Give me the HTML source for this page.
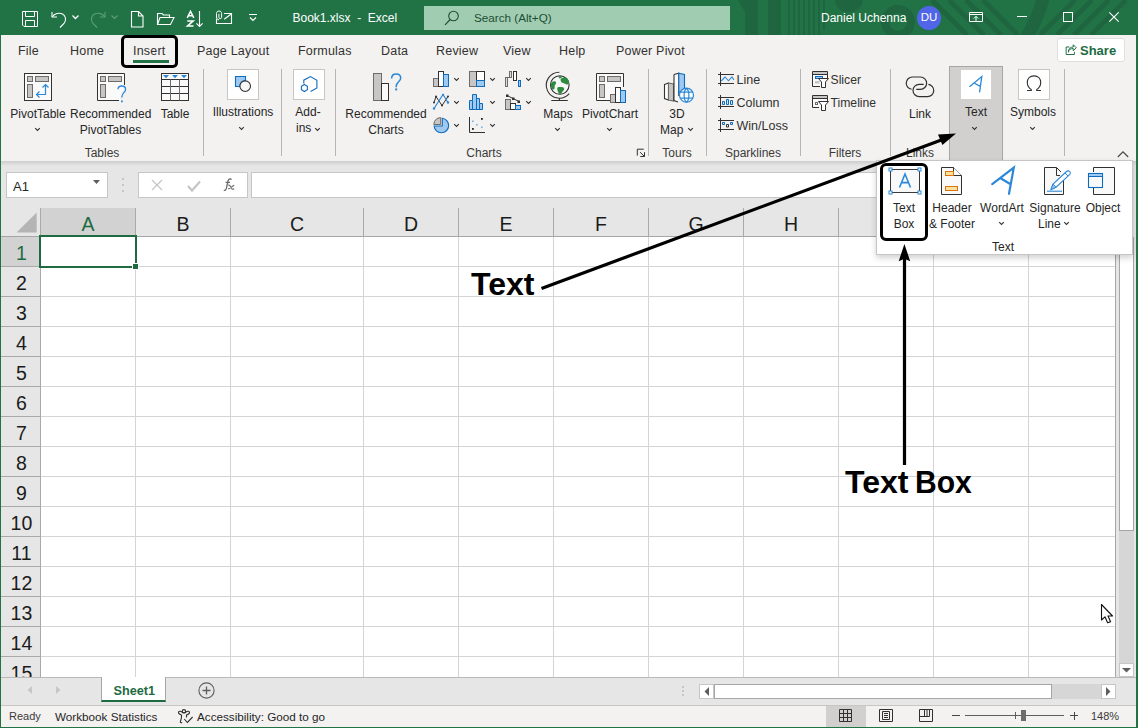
<!DOCTYPE html>
<html><head><meta charset="utf-8">
<style>
*{box-sizing:border-box;margin:0;padding:0}
html,body{width:1138px;height:728px;overflow:hidden;background:#f3f2f1;font-family:"Liberation Sans",sans-serif;color:#323130}
.a{position:absolute}
.t{position:absolute;white-space:nowrap;line-height:1}
svg{position:absolute;overflow:visible}
#title{left:0;top:0;width:1138px;height:35px;background:#217346}
#tabs .t{font-size:12.5px;top:45px;color:#323130;letter-spacing:0.2px}
.rl{font-size:12px;color:#262626}
.sep{position:absolute;top:69px;width:1px;height:87px;background:#b8b6b4}
.gl{font-size:12px;color:#3b3a39;top:147px}
#grid{left:0;top:208px;width:1116px;height:469px;background:#fff}
.vl{position:absolute;top:0;width:1px;height:469px;background:#e1e1e1}
.hl{position:absolute;left:0;width:1115px;height:1px;background:#e1e1e1}
.ch{position:absolute;top:208px;height:27px;font-size:19.5px;color:#222;text-align:center;line-height:27px}
.rh{position:absolute;left:0;width:40px;font-size:19.5px;color:#222;text-align:center;line-height:30px}
</style></head>
<body>
<!-- title bar -->
<div id="title" class="a"></div>

<!-- title pattern -->
<svg style="left:0;top:0;overflow:hidden" width="1138" height="35" viewBox="0 0 1138 35">
<g fill="#1f6640">
<path d="M738 0H758V35H745V12Z"/>
<rect x="768" y="0" width="13" height="35"/>
<rect x="788" y="0" width="2" height="35"/><rect x="793" y="0" width="2" height="35"/><rect x="798" y="0" width="2" height="35"/><rect x="803" y="0" width="2" height="35"/><rect x="808" y="0" width="2" height="35"/><rect x="813" y="0" width="2" height="35"/><rect x="818" y="0" width="2" height="35"/><rect x="823" y="0" width="2" height="30"/>
<path d="M835 0A14 12 0 0 0 863 0Z"/>
</g>
<g fill="none" stroke="#1f6640">
<circle cx="898" cy="22" r="13" stroke-width="8"/>
<path d="M1044 -5C1040 12 1034 25 1025 40" stroke-width="13"/>
</g>
<g stroke="#1f6640" stroke-width="5">
<path d="M932 0L967 35M949 0L984 35M966 0L1001 35M983 0L1018 35"/>
<path d="M1040 35L1075 0M1057 35L1092 0M1074 35L1109 0M1091 35L1126 0"/>
</g>
</svg>
<!-- quick access -->
<svg style="left:22px;top:11px" width="17" height="17" viewBox="0 0 17 17">
<path d="M0.5 0.5H15.5V15.5H2L0.5 14Z" fill="none" stroke="#fff"/>
<path d="M3.5 0.5V5.5H12.5V0.5M3.5 15.5V9.5H12.5V15.5" fill="none" stroke="#fff"/>
</svg>
<svg style="left:51px;top:11px" width="16" height="17" viewBox="0 0 16 17">
<path d="M1 1V6H6" fill="none" stroke="#fff" stroke-width="1.1"/>
<path d="M1.2 5.8C3.5 2.5 8 1.3 11.5 3C15 4.8 15.5 9.5 13 12.5L9 16.5" fill="none" stroke="#fff" stroke-width="1.1"/>
</svg>
<svg style="left:72px;top:15px" width="7" height="5"><path d="M0.5 0.5L3.5 3.5L6.5 0.5" fill="none" stroke="#fff" stroke-width="1.3"/></svg>
<svg style="left:90px;top:11px" width="16" height="17" viewBox="0 0 16 17">
<path d="M15 1V6H10" fill="none" stroke="#5f9e77" stroke-width="1.1"/>
<path d="M14.8 5.8C12.5 2.5 8 1.3 4.5 3C1 4.8 0.5 9.5 3 12.5L7 16.5" fill="none" stroke="#5f9e77" stroke-width="1.1"/>
</svg>
<svg style="left:111px;top:15px" width="7" height="5"><path d="M0.5 0.5L3.5 3.5L6.5 0.5" fill="none" stroke="#5f9e77" stroke-width="1.1"/></svg>
<svg style="left:131px;top:11px" width="13" height="17" viewBox="0 0 13 17">
<path d="M0.5 0.5H7.5L12 5V16H0.5Z M7.5 0.5V5H12" fill="none" stroke="#fff" stroke-width="1.1"/>
</svg>
<svg style="left:157px;top:13px" width="18" height="12" viewBox="0 0 18 12">
<path d="M0.5 11.5V0.5H5L6.5 2H12.5V4.5" fill="none" stroke="#fff" stroke-width="1.1"/>
<path d="M0.5 11.5L3 4.5H17L13.5 11.5Z" fill="none" stroke="#fff" stroke-width="1.1"/>
</svg>
<svg style="left:180px;top:6px" width="60" height="24" viewBox="180 6 60 24">
<path d="M187.2 17.8L190.5 11.3L193.8 17.8M188.4 15.7H192.6" fill="none" stroke="#fff" stroke-width="1.5"/>
<path d="M187.3 20.9H193.2L187.4 26.1H193.5" fill="none" stroke="#fff" stroke-width="1.5" stroke-linejoin="miter"/>
<path d="M199.5 11V26.5M196.4 23.3L199.5 26.5L202.6 23.3" fill="none" stroke="#fff" stroke-width="1.1"/>
<path d="M224 13.5H231.5V23.5H216.5V19" fill="none" stroke="#fff" stroke-width="1.1"/>
<path d="M224.2 19.3L231.2 14" fill="none" stroke="#fff" stroke-width="1.1"/>
<path d="M219 19.8C217.3 19.8 216.5 18.6 216.5 17V13.6C216.5 12 217.6 11 219 11C220.5 11 221.6 12 221.6 13.6V17.4C221.6 18.3 221 18.7 220.2 18.7C219.4 18.7 218.9 18.3 218.9 17.4V13.8" fill="none" stroke="#fff" stroke-width="1"/>
</svg>
<svg style="left:249px;top:14px" width="8" height="8" viewBox="0 0 8 8"><path d="M0 0.5H8M1 3.5L4 6.5L7 3.5" fill="none" stroke="#fff" stroke-width="1.2"/></svg>

<!-- window controls -->
<svg style="left:969px;top:12px" width="14" height="10" viewBox="0 0 14 10"><path d="M0.5 0.5H13.5V9.5H0.5ZM0.5 2.5H13.5M7 9V4.5M4.8 6.5L7 4.3L9.2 6.5" fill="none" stroke="#fff" stroke-width="1"/></svg>
<div class="a" style="left:1017px;top:16px;width:10px;height:1px;background:#fff"></div>
<div class="a" style="left:1063px;top:12px;width:10px;height:10px;border:1px solid #fff"></div>
<svg style="left:1109px;top:12px" width="10" height="10" viewBox="0 0 10 10"><path d="M0.3 0.3L9.7 9.7M9.7 0.3L0.3 9.7" stroke="#fff" stroke-width="1.1"/></svg>

<div class="t" style="left:292.5px;top:12px;font-size:12px;color:#fff">Book1.xlsx&nbsp; - &nbsp;Excel</div>
<div class="a" style="left:424px;top:6px;width:306px;height:24px;background:#a0cdb2"></div>
<div class="t" style="left:474px;top:12px;font-size:11.7px;color:#1f4d33">Search (Alt+Q)</div>
<!-- search icon -->
<svg style="left:444px;top:10px" width="16" height="16" viewBox="0 0 16 16"><circle cx="9.5" cy="6" r="4.8" fill="none" stroke="#1f4d33" stroke-width="1.1"/><path d="M6.2 9.5L1 14.8" stroke="#1f4d33" stroke-width="1.2"/></svg>
<div class="t" style="left:821px;top:12px;font-size:12px;color:#fff">Daniel Uchenna</div>
<div class="a" style="left:917px;top:6px;width:24px;height:24px;border-radius:50%;background:#5165e8"></div>
<div class="t" style="left:917px;top:12px;width:24px;text-align:center;font-size:11.5px;color:#fff">DU</div>

<!-- window borders -->
<div class="a" style="left:0;top:35px;width:1px;height:693px;background:#217346"></div>
<div class="a" style="left:1136px;top:35px;width:2px;height:693px;background:#217346"></div>
<div class="a" style="left:0;top:727px;width:1138px;height:1px;background:#217346"></div>

<!-- tabs -->
<div id="tabs">
<div class="t" style="left:18px">File</div>
<div class="t" style="left:70px">Home</div>
<div class="t" style="left:133px">Insert</div>
<div class="t" style="left:197px">Page Layout</div>
<div class="t" style="left:298px">Formulas</div>
<div class="t" style="left:381px">Data</div>
<div class="t" style="left:436px">Review</div>
<div class="t" style="left:503px">View</div>
<div class="t" style="left:559px">Help</div>
<div class="t" style="left:616px">Power Pivot</div>
</div>
<div class="a" style="left:133px;top:60px;width:36px;height:3px;background:#217346"></div>
<div class="a" style="left:121px;top:35px;width:57px;height:33px;border:3px solid #000;border-radius:5px"></div>


<!-- ===== RIBBON ===== -->
<div id="ribbon">
<!-- separators -->
<div class="sep" style="left:203px"></div>
<div class="sep" style="left:281px"></div>
<div class="sep" style="left:335px"></div>
<div class="sep" style="left:648px"></div>
<div class="sep" style="left:706px"></div>
<div class="sep" style="left:800px"></div>
<div class="sep" style="left:890px"></div>
<div class="sep" style="left:1064px"></div>

<!-- group labels -->
<div class="t gl" style="left:62px;width:80px;text-align:center">Tables</div>
<div class="t gl" style="left:444px;width:80px;text-align:center">Charts</div>
<div class="t gl" style="left:637px;width:80px;text-align:center">Tours</div>
<div class="t gl" style="left:713px;width:80px;text-align:center">Sparklines</div>
<div class="t gl" style="left:805px;width:80px;text-align:center">Filters</div>
<div class="t gl" style="left:880px;width:80px;text-align:center">Links</div>

<!-- Tables -->
<svg style="left:24px;top:73px" width="28" height="28" viewBox="0 0 28 28">
<rect x="0.5" y="0.5" width="27" height="27" fill="#fafafa" stroke="#323130"/>
<rect x="3.5" y="3.5" width="5" height="5" fill="#c8c6c4" stroke="#6e6c6a"/>
<rect x="11.5" y="3.5" width="13" height="5" fill="#c8c6c4" stroke="#6e6c6a"/>
<rect x="3.5" y="11.5" width="5" height="13" fill="#c8c6c4" stroke="#6e6c6a"/>
<path d="M21.5 11.5V21.5H12.5M18.5 14.5L21.5 11.5L24.5 14.5M15.5 18.5L12.5 21.5L15.5 24.5" fill="none" stroke="#2b88d8" stroke-width="1.2"/>
</svg>
<div class="t rl" style="left:8px;top:107.5px;width:60px;text-align:center">PivotTable</div>
<svg style="left:34px;top:127px" width="7" height="5"><path d="M1.2 1.2L3.5 3.5L5.8 1.2" fill="none" stroke="#323130" stroke-width="1.1"/></svg>

<svg style="left:97px;top:73px" width="31" height="30" viewBox="0 0 31 30">
<path d="M27.5 12V0.5H0.5V27.5H22" fill="#fafafa" stroke="#323130"/>
<rect x="3.5" y="3.5" width="5" height="5" fill="#c8c6c4" stroke="#6e6c6a"/>
<rect x="11.5" y="3.5" width="13" height="5" fill="#c8c6c4" stroke="#6e6c6a"/>
<rect x="3.5" y="11.5" width="5" height="13" fill="#c8c6c4" stroke="#6e6c6a"/>
<path d="M21 16.2C21 14 22.6 13 24.8 13C27 13 28.6 14.4 28.6 16.4C28.6 19.4 24.9 20 24.9 23.6V24.6" fill="none" stroke="#2b88d8" stroke-width="1.3"/>
<rect x="24" y="27.5" width="1.8" height="1.8" fill="#2b88d8"/>
</svg>
<div class="t rl" style="left:70px;top:108px;width:81px;text-align:center">Recommended</div>
<div class="t rl" style="left:70px;top:124px;width:81px;text-align:center">PivotTables</div>

<svg style="left:161px;top:73px" width="28" height="28" viewBox="0 0 28 28">
<rect x="0.5" y="0.5" width="27" height="27" fill="#fafafa" stroke="#323130"/>
<path d="M0.5 6.5H27.5M0.5 13.5H27.5M0.5 20.5H27.5" stroke="#323130"/>
<path d="M9.5 6.5V27.5M18.5 6.5V27.5" stroke="#6e6c6a"/>
<path d="M2 2H8L5 5.2ZM11 2H17L14 5.2ZM20 2H26L23 5.2Z" fill="#2b88d8"/>
</svg>
<div class="t rl" style="left:155px;top:108px;width:40px;text-align:center">Table</div>

<!-- Illustrations -->
<div class="a" style="left:227px;top:69px;width:32px;height:31px;background:#fff;border:1px solid #c8c6c4"></div>
<svg style="left:227px;top:69px" width="32" height="31" viewBox="0 0 32 31">
<path d="M8.5 7.5H18.5V11.5A5.5 5.5 0 0 0 13 17.5H8.5Z" fill="#9fc9f0" stroke="#0f6cbd" stroke-width="1.1"/>
<circle cx="18.2" cy="17.2" r="5.3" fill="#f8f8f8" stroke="#323130" stroke-width="1.1"/>
</svg>
<div class="t rl" style="left:207px;top:106px;width:72px;text-align:center">Illustrations</div>
<svg style="left:238px;top:126px" width="7" height="5"><path d="M1.2 1.2L3.5 3.5L5.8 1.2" fill="none" stroke="#323130" stroke-width="1.1"/></svg>

<!-- Add-ins -->
<div class="a" style="left:293px;top:69px;width:32px;height:31px;background:#fff;border:1px solid #c8c6c4"></div>
<svg style="left:293px;top:69px" width="32" height="31" viewBox="0 0 32 31">
<path d="M10.8 14.5V11.2L17.4 7.6L23.9 11.2V18.9L17.6 22.5" fill="none" stroke="#0f6cbd" stroke-width="1.1"/>
<path d="M11.4 15.5L14.4 17.25V20.75L11.4 22.5L8.4 20.75V17.25Z" fill="none" stroke="#0f6cbd" stroke-width="1.1"/>
</svg>
<div class="t rl" style="left:288px;top:106px;width:40px;text-align:center">Add-</div>
<div class="t rl" style="left:296px;top:122px">ins</div>
<svg style="left:314px;top:127px" width="7" height="5"><path d="M1.2 1.2L3.5 3.5L5.8 1.2" fill="none" stroke="#323130" stroke-width="1.1"/></svg>

<!-- Charts -->
<svg style="left:373px;top:73px" width="30" height="29" viewBox="0 0 30 29">
<rect x="0.5" y="0.5" width="8" height="27" fill="#c8c6c4" stroke="#6e6c6a"/>
<rect x="8.5" y="10.5" width="7" height="17" fill="#fafafa" stroke="#323130"/>
<path d="M18.6 5.6C18.6 2.6 20.4 0.9 23.2 0.9C25.9 0.9 27.7 2.6 27.7 5C27.7 8.6 23.2 9 23.2 13.3V14.3" fill="none" stroke="#2b88d8" stroke-width="1.5"/>
<rect x="22.2" y="15.4" width="2" height="2" fill="#2b88d8"/>
</svg>
<div class="t rl" style="left:341px;top:108px;width:90px;text-align:center">Recommended</div>
<div class="t rl" style="left:341px;top:124px;width:90px;text-align:center">Charts</div>

<svg style="left:433px;top:71px" width="16" height="16" viewBox="0 0 16 16">
<rect x="0.5" y="7.5" width="5" height="8" fill="#c8c6c4" stroke="#6e6c6a"/>
<rect x="5.5" y="0.5" width="5" height="15" fill="#fff" stroke="#323130"/>
<rect x="10.5" y="3.5" width="5" height="12" fill="#9fc9f0" stroke="#0f6cbd"/>
</svg>
<svg style="left:469px;top:71px" width="16" height="16" viewBox="0 0 16 16">
<rect x="0.5" y="0.5" width="7" height="15" fill="#c8c6c4" stroke="#6e6c6a"/>
<rect x="7.5" y="0.5" width="8" height="9" fill="#fff" stroke="#323130"/>
<rect x="7.5" y="9.5" width="8" height="6" fill="#9fc9f0" stroke="#0f6cbd"/>
</svg>
<svg style="left:505px;top:71px" width="16" height="16" viewBox="0 0 16 16">
<rect x="0.5" y="6.5" width="2" height="9" fill="#e0dfde" stroke="#6e6c6a"/>
<rect x="4.5" y="0.5" width="2" height="6" fill="#e0dfde" stroke="#6e6c6a"/>
<path d="M2.5 6.5H4.5" stroke="#6e6c6a"/>
<rect x="8.5" y="0.5" width="3" height="9" fill="#fff" stroke="#323130"/>
<rect x="13.5" y="9.5" width="2" height="6" fill="#9fc9f0" stroke="#0f6cbd"/>
</svg>
<svg style="left:433px;top:94px" width="16" height="16" viewBox="0 0 16 16">
<path d="M1 8.5L3 2.5L9 11.5L15 2.5" fill="none" stroke="#323130" stroke-width="1"/>
<path d="M1 14.5L10 0.5L15 8.5" fill="none" stroke="#2b88d8" stroke-width="1.2"/>
<circle cx="1" cy="14.5" r="1.2" fill="#2b88d8"/><circle cx="15" cy="8.5" r="1.2" fill="#2b88d8"/><circle cx="10" cy="0.8" r="1.1" fill="#2b88d8"/>
<circle cx="1" cy="8.5" r="1" fill="#323130"/><circle cx="3" cy="2.5" r="1" fill="#323130"/><circle cx="9" cy="11.5" r="1" fill="#323130"/><circle cx="15" cy="2.5" r="1" fill="#323130"/>
</svg>
<svg style="left:469px;top:94px" width="16" height="16" viewBox="0 0 16 16">
<path d="M0.5 15.5V6.5H3.5V0.5H7.5V4.5H10.5V9.5H13.5V15.5Z" fill="#9fc9f0" stroke="#0f6cbd"/>
<path d="M3.5 6.5V15.5M7.5 4.5V15.5M10.5 9.5V15.5" stroke="#0f6cbd"/>
</svg>
<svg style="left:505px;top:94px" width="16" height="16" viewBox="0 0 16 16">
<rect x="0.5" y="5.5" width="5" height="10" fill="#c8c6c4" stroke="#6e6c6a"/>
<rect x="5.5" y="9.5" width="5" height="6" fill="#fff" stroke="#323130"/>
<rect x="10.5" y="11.5" width="5" height="4" fill="#9fc9f0" stroke="#0f6cbd"/>
<path d="M2 1.5L14 7.5" stroke="#323130"/>
<rect x="1" y="0.5" width="2.5" height="2.5" fill="#323130"/><rect x="7" y="3.5" width="2.5" height="2.5" fill="#323130"/><rect x="12.5" y="6.5" width="2.5" height="2.5" fill="#323130"/>
</svg>
<svg style="left:433px;top:117px" width="18" height="18" viewBox="0 0 18 18">
<path d="M9.3 9V1.2A7.3 7.3 0 1 1 1.1 9Z" fill="#9fc9f0" stroke="#0f6cbd" stroke-width="1.1"/>
<path d="M7.7 7.5V0.6A6.9 6.9 0 0 0 0.8 7.5Z" fill="#c8c6c4" stroke="#6e6c6a" stroke-width="1"/>
</svg>
<svg style="left:469px;top:117px" width="16" height="16" viewBox="0 0 16 16">
<path d="M0.5 0V15.5H16" fill="none" stroke="#323130"/>
<rect x="3" y="3.5" width="1.6" height="1.6" fill="#6fb1ea"/><rect x="7" y="7" width="1.6" height="1.6" fill="#6fb1ea"/><rect x="12" y="9.5" width="1.6" height="1.6" fill="#6fb1ea"/>
<rect x="3" y="11" width="1.8" height="1.8" fill="#222"/><rect x="12" y="1" width="1.8" height="1.8" fill="#222"/>
</svg>
<svg style="left:453px;top:77px" width="7" height="5"><path d="M1.2 1.2L3.5 3.5L5.8 1.2" fill="none" stroke="#323130" stroke-width="1.1"/></svg>
<svg style="left:489px;top:77px" width="7" height="5"><path d="M1.2 1.2L3.5 3.5L5.8 1.2" fill="none" stroke="#323130" stroke-width="1.1"/></svg>
<svg style="left:525px;top:77px" width="7" height="5"><path d="M1.2 1.2L3.5 3.5L5.8 1.2" fill="none" stroke="#323130" stroke-width="1.1"/></svg>
<svg style="left:453px;top:100px" width="7" height="5"><path d="M1.2 1.2L3.5 3.5L5.8 1.2" fill="none" stroke="#323130" stroke-width="1.1"/></svg>
<svg style="left:489px;top:100px" width="7" height="5"><path d="M1.2 1.2L3.5 3.5L5.8 1.2" fill="none" stroke="#323130" stroke-width="1.1"/></svg>
<svg style="left:525px;top:100px" width="7" height="5"><path d="M1.2 1.2L3.5 3.5L5.8 1.2" fill="none" stroke="#323130" stroke-width="1.1"/></svg>
<svg style="left:453px;top:123px" width="7" height="5"><path d="M1.2 1.2L3.5 3.5L5.8 1.2" fill="none" stroke="#323130" stroke-width="1.1"/></svg>
<svg style="left:489px;top:123px" width="7" height="5"><path d="M1.2 1.2L3.5 3.5L5.8 1.2" fill="none" stroke="#323130" stroke-width="1.1"/></svg>

<!-- Maps -->
<svg style="left:546px;top:71px" width="26" height="31" viewBox="0 0 26 31">
<circle cx="13.8" cy="14" r="9.3" fill="#f7f7f7" stroke="#323130" stroke-width="1.1"/>
<path d="M13.4 1.2A13 13 0 1 0 23.2 22.6" fill="none" stroke="#323130" stroke-width="1.1"/>
<path d="M13.4 27V29.5M5.3 29.5H21.8" stroke="#323130" stroke-width="1.1"/>
<path d="M14.6 8.5C15.5 6.5 18.5 6.2 20.5 7C22.5 8 23.2 10.5 22.8 12.5C22 13.8 20.5 13.8 19.5 13C18.5 12.2 17 12.5 16 11.5C15 10.8 14.4 9.5 14.6 8.5Z" fill="#2e8b3e"/>
<path d="M5 12.5C5.5 10.8 7.5 10 9.5 10.5C10.5 11.5 10.2 13 9 14C8.3 15 9 16.5 8.5 17.8C7.8 19 6.2 18.5 5.5 17C4.8 15.5 4.7 14 5 12.5Z" fill="#2e8b3e"/>
<path d="M11.5 16.5C13 15.8 15.5 16 17.5 16.5C18.8 17.2 18.2 19 17 20C16 21 15.8 22.5 14.5 23C13 23.2 12.5 22 12 20.8C11.5 19.5 10.8 17.5 11.5 16.5Z" fill="#2e8b3e"/>
<path d="M12.8 5.5C13.5 4.8 15.5 4.8 15.8 5.8C15.8 6.8 14.8 7.5 13.8 7.5C13 7.3 12.5 6.3 12.8 5.5Z" fill="#2e8b3e"/>
</svg>
<div class="t rl" style="left:538px;top:108px;width:40px;text-align:center">Maps</div>
<svg style="left:554px;top:127px" width="7" height="5"><path d="M1.2 1.2L3.5 3.5L5.8 1.2" fill="none" stroke="#323130" stroke-width="1.1"/></svg>

<svg style="left:596px;top:73px" width="31" height="30" viewBox="0 0 31 30">
<path d="M14 27.5H0.5V0.5H27.5V14" fill="#fafafa" stroke="#323130"/>
<rect x="3.5" y="3.5" width="5" height="5" fill="#c8c6c4" stroke="#6e6c6a"/>
<rect x="11.5" y="3.5" width="13" height="5" fill="#c8c6c4" stroke="#6e6c6a"/>
<rect x="3.5" y="11.5" width="5" height="13" fill="#c8c6c4" stroke="#6e6c6a"/>
<rect x="14.5" y="21.5" width="5" height="8" fill="#c8c6c4" stroke="#6e6c6a"/>
<rect x="19.5" y="14.5" width="5" height="15" fill="#fff" stroke="#323130"/>
<rect x="24.5" y="17.5" width="5" height="12" fill="#9fc9f0" stroke="#0f6cbd"/>
</svg>
<div class="t rl" style="left:580px;top:108px;width:60px;text-align:center">PivotChart</div>
<svg style="left:606px;top:127px" width="7" height="5"><path d="M1.2 1.2L3.5 3.5L5.8 1.2" fill="none" stroke="#323130" stroke-width="1.1"/></svg>
<svg style="left:630px;top:140px" width="20" height="20" viewBox="630 140 20 20"><path d="M637.3 155.6V149.2H643.7M640.1 152.2L644.3 156.3M644.5 152.2V156.5H640.3" fill="none" stroke="#323130" stroke-width="1"/></svg>

<!-- Tours -->
<svg style="left:663px;top:72px" width="33" height="32" viewBox="0 0 33 32">
<path d="M1.5 12.5L5.5 11V28L1.5 26.5Z" fill="#fff" stroke="#323130" stroke-width="1.1"/>
<path d="M5.5 11L10.5 12V29L5.5 28Z" fill="#c8c6c4" stroke="#6e6c6a" stroke-width="1.1"/>
<path d="M11 2.5L15.8 1.2V24M11 2.5V28.5L15 30" fill="#fff" stroke="#323130" stroke-width="1.1"/>
<path d="M15.8 1.2L21.5 2.5V16.5L15.8 21Z" fill="#9fc9f0" stroke="#0f6cbd" stroke-width="1.1"/>
<circle cx="23.5" cy="23.2" r="7" fill="#fff" stroke="#2b88d8" stroke-width="1.2"/>
<path d="M17 20.2H30M17 26.2H30M23.5 16.2C20.3 19 20.3 27.5 23.5 30.2M23.5 16.2C26.7 19 26.7 27.5 23.5 30.2" fill="none" stroke="#2b88d8" stroke-width="1.2"/>
</svg>
<div class="t rl" style="left:657px;top:108px;width:40px;text-align:center">3D</div>
<div class="t rl" style="left:660px;top:124px">Map</div>
<svg style="left:687px;top:127px" width="7" height="5"><path d="M1.2 1.2L3.5 3.5L5.8 1.2" fill="none" stroke="#323130" stroke-width="1.1"/></svg>

<!-- Sparklines -->
<svg style="left:718px;top:72px" width="17" height="14" viewBox="0 0 17 14">
<path d="M2.5 0V14M0 2.5H16M0 11.5H16" stroke="#323130"/>
<path d="M3.2 9L7 5L10.5 8.8L14 5L16 8" fill="none" stroke="#2b88d8" stroke-width="1.1"/>
</svg>
<svg style="left:718px;top:95px" width="17" height="14" viewBox="0 0 17 14">
<path d="M2.5 0V14M0 2.5H16M0 11.5H16" stroke="#323130"/>
<path d="M4.5 6.5H6.5V9.5H4.5ZM8.5 4.5H10.5V9.5H8.5ZM12.5 5.5H14.5V9.5H12.5Z" fill="#cfe4f7" stroke="#0f6cbd"/>
</svg>
<svg style="left:718px;top:118px" width="17" height="14" viewBox="0 0 17 14">
<path d="M2.5 0V14M0 2.5H16M0 11.5H16" stroke="#323130"/>
<path d="M4.5 4.5H6.5V6.5H4.5ZM12.5 4.5H14.5V6.5H12.5Z" fill="#cfe4f7" stroke="#0f6cbd"/>
<path d="M8.5 6.5H10.5V9H8.5Z" fill="#fff" stroke="#323130"/>
</svg>
<div class="t" style="left:736.5px;top:74.3px;font-size:12.5px;color:#323130">Line</div>
<div class="t" style="left:736.5px;top:97.3px;font-size:12.5px;color:#323130">Column</div>
<div class="t" style="left:736.5px;top:120.3px;font-size:12.5px;color:#323130">Win/Loss</div>

<!-- Filters -->
<svg style="left:812px;top:71px" width="17" height="17" viewBox="0 0 17 17">
<path d="M15.5 7V0.5H0.5V15.5H8" fill="#fafafa" stroke="#323130"/>
<rect x="1" y="1" width="14" height="2.5" fill="#c8c6c4"/>
<path d="M0.5 3.5H15.5" stroke="#323130"/>
<rect x="3.5" y="5.5" width="7" height="2" fill="#9fc9f0" stroke="#0f6cbd" stroke-width="1"/>
<rect x="3" y="10" width="4.5" height="2.5" fill="#c8c6c4"/>
<path d="M6.5 7.5H16.5L13.5 11V16.5H9.5V11Z" fill="#fff" stroke="#323130"/>
</svg>
<svg style="left:812px;top:95px" width="17" height="17" viewBox="0 0 17 17">
<path d="M15.5 6V0.5H0.5V12.5H7" fill="#fafafa" stroke="#323130"/>
<rect x="1" y="1" width="14" height="2.5" fill="#c8c6c4"/>
<path d="M0.5 3.5H15.5" stroke="#323130"/>
<rect x="3.5" y="7.5" width="2" height="2" fill="#fff" stroke="#6e6c6a" stroke-width="1"/>
<path d="M6.5 6.5H16.5L13.5 10V15.5H9.5V10Z" fill="#fff" stroke="#323130"/>
</svg>
<div class="t" style="left:830.5px;top:74.3px;font-size:12.2px;color:#323130">Slicer</div>
<div class="t" style="left:830.5px;top:97.3px;font-size:12.2px;color:#323130">Timeline</div>

<!-- Links -->
<svg style="left:905px;top:76px" width="30" height="22" viewBox="0 0 30 22">
<path d="M6.6 13.25A6.15 6.15 0 0 1 7.3 1H15.5A6.15 6.15 0 0 1 15.5 13.3H11.3" fill="none" stroke="#323130" stroke-width="1.2"/>
<path d="M18.7 8.3H14.15A6.15 6.15 0 0 0 14.15 20.6H22.6A6.15 6.15 0 0 0 23.4 8.35" fill="none" stroke="#323130" stroke-width="1.2"/>
</svg>
<div class="t rl" style="left:900px;top:108px;width:40px;text-align:center">Link</div>

<!-- Text (highlighted) -->
<div class="a" style="left:949px;top:66px;width:54px;height:100px;background:#d2d0ce;border:1px solid #a6a6a6;border-bottom:none"></div>
<div class="a" style="left:961px;top:70px;width:30px;height:29px;background:#fff"></div>
<svg style="left:961px;top:70px" width="30" height="29" viewBox="0 0 30 29">
<path d="M8.8 16.4L20.8 6.6L18.6 21.8M13 13L19.4 16.4" fill="none" stroke="#2b88d8" stroke-width="1.3" stroke-linecap="round"/>
</svg>
<div class="t rl" style="left:956px;top:105.5px;width:40px;text-align:center">Text</div>
<svg style="left:971px;top:126px" width="7" height="5"><path d="M1.2 1.2L3.5 3.5L5.8 1.2" fill="none" stroke="#323130" stroke-width="1.1"/></svg>

<!-- Symbols -->
<div class="a" style="left:1018px;top:69px;width:32px;height:31px;background:#fff;border:1px solid #c8c6c4"></div>
<svg style="left:1018px;top:69px" width="32" height="31" viewBox="1018 69 32 31"><path d="M1027 90.5H1031.3V89.6C1028.6 87.8 1027.3 85.4 1027.3 82.6C1027.3 78.5 1030 75.9 1034 75.9C1038 75.9 1040.7 78.5 1040.7 82.6C1040.7 85.4 1039.4 87.8 1036.7 89.6V90.5H1041" fill="none" stroke="#323130" stroke-width="1.1"/></svg>
<div class="t rl" style="left:1008px;top:105.5px;width:50px;text-align:center">Symbols</div>
<svg style="left:1029px;top:126px" width="7" height="5"><path d="M1.2 1.2L3.5 3.5L5.8 1.2" fill="none" stroke="#323130" stroke-width="1.1"/></svg>

<svg style="left:1117px;top:151px" width="12" height="7"><path d="M0.8 6L6 0.8L11.2 6" fill="none" stroke="#484644" stroke-width="1.2"/></svg>

<!-- Share -->
<div class="a" style="left:1057px;top:38px;width:68px;height:24px;background:#fff;border:1px solid #e1dfdd;border-radius:3px"></div>
<svg style="left:1065px;top:44px" width="12" height="12" viewBox="0 0 16 15">
<path d="M6 3.5H1.5V13.5H12.5V10" fill="none" stroke="#1e6b41" stroke-width="1.3"/>
<path d="M4.5 10.5C5 6.5 8 5.5 11 5.5V8.5L15 4.5L11 0.5V3.5C7 3.5 4.5 6 4.5 10.5Z" fill="none" stroke="#1e6b41" stroke-width="1.3"/>
</svg>
<div class="t" style="left:1080px;top:44px;font-size:13px;font-weight:bold;color:#1e6b41">Share</div>
</div>

<!-- ribbon shadow -->
<!-- formula area -->
<div class="a" style="left:1px;top:161px;width:1135px;height:47px;background:#e6e6e6"></div>
<div class="a" style="left:1px;top:161px;width:1135px;height:5px;background:linear-gradient(#cdcdcd,#e6e6e6)"></div>
<div class="a" style="left:6px;top:172px;width:102px;height:26px;background:#fff;border:1px solid #c6c6c6"></div>
<div class="t" style="left:13px;top:180px;font-size:13px;color:#262626">A1</div>
<div class="a" style="left:138px;top:172px;width:110px;height:26px;background:#fff;border:1px solid #c6c6c6"></div>
<div class="a" style="left:251px;top:172px;width:881px;height:26px;background:#fff;border:1px solid #c6c6c6"></div>

<!-- grid -->
<div id="grid" class="a" style="left:0;top:208px;width:1116px;height:469px;background:#fff">
<div class="a" style="left:0px;top:0px;width:1115px;height:28px;background:#e6e6e6"></div>
<div class="a" style="left:0px;top:0px;width:40px;height:469px;background:#e6e6e6"></div>
<div class="a" style="left:41px;top:0px;width:94px;height:28px;background:#d2d2d2"></div>
<div class="a" style="left:0px;top:29px;width:40px;height:29px;background:#d2d2d2"></div>
<div class="a" style="left:135px;top:0px;width:1px;height:28px;background:#a9a9a9"></div>
<div class="a" style="left:135px;top:29px;width:1px;height:440px;background:#d4d4d4"></div>
<div class="a" style="left:230px;top:0px;width:1px;height:28px;background:#a9a9a9"></div>
<div class="a" style="left:230px;top:29px;width:1px;height:440px;background:#d4d4d4"></div>
<div class="a" style="left:363px;top:0px;width:1px;height:28px;background:#a9a9a9"></div>
<div class="a" style="left:363px;top:29px;width:1px;height:440px;background:#d4d4d4"></div>
<div class="a" style="left:458px;top:0px;width:1px;height:28px;background:#a9a9a9"></div>
<div class="a" style="left:458px;top:29px;width:1px;height:440px;background:#d4d4d4"></div>
<div class="a" style="left:553px;top:0px;width:1px;height:28px;background:#a9a9a9"></div>
<div class="a" style="left:553px;top:29px;width:1px;height:440px;background:#d4d4d4"></div>
<div class="a" style="left:648px;top:0px;width:1px;height:28px;background:#a9a9a9"></div>
<div class="a" style="left:648px;top:29px;width:1px;height:440px;background:#d4d4d4"></div>
<div class="a" style="left:743px;top:0px;width:1px;height:28px;background:#a9a9a9"></div>
<div class="a" style="left:743px;top:29px;width:1px;height:440px;background:#d4d4d4"></div>
<div class="a" style="left:838px;top:0px;width:1px;height:28px;background:#a9a9a9"></div>
<div class="a" style="left:838px;top:29px;width:1px;height:440px;background:#d4d4d4"></div>
<div class="a" style="left:933px;top:0px;width:1px;height:28px;background:#a9a9a9"></div>
<div class="a" style="left:933px;top:29px;width:1px;height:440px;background:#d4d4d4"></div>
<div class="a" style="left:1028px;top:0px;width:1px;height:28px;background:#a9a9a9"></div>
<div class="a" style="left:1028px;top:29px;width:1px;height:440px;background:#d4d4d4"></div>
<div class="a" style="left:40px;top:0px;width:1px;height:469px;background:#a9a9a9"></div>
<div class="a" style="left:0px;top:28px;width:1115px;height:1px;background:#a6a6a6"></div>
<div class="a" style="left:41px;top:58px;width:1074px;height:1px;background:#d4d4d4"></div>
<div class="a" style="left:0px;top:58px;width:40px;height:1px;background:#a9a9a9"></div>
<div class="a" style="left:41px;top:88px;width:1074px;height:1px;background:#d4d4d4"></div>
<div class="a" style="left:0px;top:88px;width:40px;height:1px;background:#a9a9a9"></div>
<div class="a" style="left:41px;top:118px;width:1074px;height:1px;background:#d4d4d4"></div>
<div class="a" style="left:0px;top:118px;width:40px;height:1px;background:#a9a9a9"></div>
<div class="a" style="left:41px;top:148px;width:1074px;height:1px;background:#d4d4d4"></div>
<div class="a" style="left:0px;top:148px;width:40px;height:1px;background:#a9a9a9"></div>
<div class="a" style="left:41px;top:178px;width:1074px;height:1px;background:#d4d4d4"></div>
<div class="a" style="left:0px;top:178px;width:40px;height:1px;background:#a9a9a9"></div>
<div class="a" style="left:41px;top:208px;width:1074px;height:1px;background:#d4d4d4"></div>
<div class="a" style="left:0px;top:208px;width:40px;height:1px;background:#a9a9a9"></div>
<div class="a" style="left:41px;top:238px;width:1074px;height:1px;background:#d4d4d4"></div>
<div class="a" style="left:0px;top:238px;width:40px;height:1px;background:#a9a9a9"></div>
<div class="a" style="left:41px;top:268px;width:1074px;height:1px;background:#d4d4d4"></div>
<div class="a" style="left:0px;top:268px;width:40px;height:1px;background:#a9a9a9"></div>
<div class="a" style="left:41px;top:298px;width:1074px;height:1px;background:#d4d4d4"></div>
<div class="a" style="left:0px;top:298px;width:40px;height:1px;background:#a9a9a9"></div>
<div class="a" style="left:41px;top:328px;width:1074px;height:1px;background:#d4d4d4"></div>
<div class="a" style="left:0px;top:328px;width:40px;height:1px;background:#a9a9a9"></div>
<div class="a" style="left:41px;top:358px;width:1074px;height:1px;background:#d4d4d4"></div>
<div class="a" style="left:0px;top:358px;width:40px;height:1px;background:#a9a9a9"></div>
<div class="a" style="left:41px;top:388px;width:1074px;height:1px;background:#d4d4d4"></div>
<div class="a" style="left:0px;top:388px;width:40px;height:1px;background:#a9a9a9"></div>
<div class="a" style="left:41px;top:418px;width:1074px;height:1px;background:#d4d4d4"></div>
<div class="a" style="left:0px;top:418px;width:40px;height:1px;background:#a9a9a9"></div>
<div class="a" style="left:41px;top:448px;width:1074px;height:1px;background:#d4d4d4"></div>
<div class="a" style="left:0px;top:448px;width:40px;height:1px;background:#a9a9a9"></div>
<div class="a" style="left:1115px;top:0px;width:1px;height:469px;background:#a6a6a6"></div>
<div class="a" style="left:40px;top:0;width:96px;height:28px;font-size:19.5px;line-height:32px;text-align:center;color:#1e6b41">A</div>
<div class="a" style="left:135px;top:0;width:96px;height:28px;font-size:19.5px;line-height:32px;text-align:center;color:#1b1b1b">B</div>
<div class="a" style="left:230px;top:0;width:134px;height:28px;font-size:19.5px;line-height:32px;text-align:center;color:#1b1b1b">C</div>
<div class="a" style="left:363px;top:0;width:96px;height:28px;font-size:19.5px;line-height:32px;text-align:center;color:#1b1b1b">D</div>
<div class="a" style="left:458px;top:0;width:96px;height:28px;font-size:19.5px;line-height:32px;text-align:center;color:#1b1b1b">E</div>
<div class="a" style="left:553px;top:0;width:96px;height:28px;font-size:19.5px;line-height:32px;text-align:center;color:#1b1b1b">F</div>
<div class="a" style="left:648px;top:0;width:96px;height:28px;font-size:19.5px;line-height:32px;text-align:center;color:#1b1b1b">G</div>
<div class="a" style="left:743px;top:0;width:96px;height:28px;font-size:19.5px;line-height:32px;text-align:center;color:#1b1b1b">H</div>
<div class="a" style="left:838px;top:0;width:96px;height:28px;font-size:19.5px;line-height:32px;text-align:center;color:#1b1b1b">I</div>
<div class="a" style="left:933px;top:0;width:96px;height:28px;font-size:19.5px;line-height:32px;text-align:center;color:#1b1b1b">J</div>
<div class="a" style="left:1028px;top:0;width:88px;height:28px;font-size:19.5px;line-height:32px;text-align:center;color:#1b1b1b">K</div>
<div class="a" style="left:1.4px;top:29px;width:40px;height:29px;font-size:19.5px;line-height:33px;text-align:center;color:#1e6b41">1</div>
<div class="a" style="left:1.4px;top:59px;width:40px;height:29px;font-size:19.5px;line-height:33px;text-align:center;color:#1b1b1b">2</div>
<div class="a" style="left:1.4px;top:89px;width:40px;height:29px;font-size:19.5px;line-height:33px;text-align:center;color:#1b1b1b">3</div>
<div class="a" style="left:1.4px;top:119px;width:40px;height:29px;font-size:19.5px;line-height:33px;text-align:center;color:#1b1b1b">4</div>
<div class="a" style="left:1.4px;top:149px;width:40px;height:29px;font-size:19.5px;line-height:33px;text-align:center;color:#1b1b1b">5</div>
<div class="a" style="left:1.4px;top:179px;width:40px;height:29px;font-size:19.5px;line-height:33px;text-align:center;color:#1b1b1b">6</div>
<div class="a" style="left:1.4px;top:209px;width:40px;height:29px;font-size:19.5px;line-height:33px;text-align:center;color:#1b1b1b">7</div>
<div class="a" style="left:1.4px;top:239px;width:40px;height:29px;font-size:19.5px;line-height:33px;text-align:center;color:#1b1b1b">8</div>
<div class="a" style="left:1.4px;top:269px;width:40px;height:29px;font-size:19.5px;line-height:33px;text-align:center;color:#1b1b1b">9</div>
<div class="a" style="left:1.4px;top:299px;width:40px;height:29px;font-size:19.5px;line-height:33px;text-align:center;color:#1b1b1b">10</div>
<div class="a" style="left:1.4px;top:329px;width:40px;height:29px;font-size:19.5px;line-height:33px;text-align:center;color:#1b1b1b">11</div>
<div class="a" style="left:1.4px;top:359px;width:40px;height:29px;font-size:19.5px;line-height:33px;text-align:center;color:#1b1b1b">12</div>
<div class="a" style="left:1.4px;top:389px;width:40px;height:29px;font-size:19.5px;line-height:33px;text-align:center;color:#1b1b1b">13</div>
<div class="a" style="left:1.4px;top:419px;width:40px;height:29px;font-size:19.5px;line-height:33px;text-align:center;color:#1b1b1b">14</div>
<div class="a" style="left:1.4px;top:449px;width:40px;height:29px;font-size:19.5px;line-height:33px;text-align:center;color:#1b1b1b">15</div>
<svg style="left:0;top:0" width="40" height="28"><polygon points="36.7,4.5 36.7,24.6 16.5,24.6" fill="#b4b4b4"/></svg>
<div class="a" style="left:39px;top:27px;width:98px;height:33px;border:2px solid #1e6b41"></div>
<div class="a" style="left:132px;top:55px;width:7px;height:7px;background:#1e6b41;border:1px solid #fff"></div>
</div>

<!-- sheet tab bar -->
<div class="a" style="left:1px;top:677px;width:1135px;height:29px;background:#e6e6e6;border-top:1px solid #b9b9b9;border-bottom:1px solid #c6c6c6"></div>
<div class="a" style="left:101px;top:677px;width:65px;height:25px;background:#fff;border-left:1px solid #a6a6a6;border-right:1px solid #a6a6a6;border-bottom:2px solid #1e6b41"></div>
<div class="t" style="left:113.5px;top:684.5px;font-size:12.7px;font-weight:bold;color:#1e6b41">Sheet1</div>

<!-- status bar -->
<div class="t" style="left:9px;top:711px;font-size:11px;color:#3b3a39">Ready</div>
<div class="t" style="left:55px;top:711px;font-size:11.7px;color:#262626">Workbook Statistics</div>
<div class="t" style="left:197px;top:711px;font-size:11.7px;color:#262626">Accessibility: Good to go</div>
<div class="a" style="left:826px;top:706px;width:40px;height:21px;background:#d2d0ce"></div>
<div class="t" style="left:1091px;top:711px;font-size:11px;color:#3b3a39">148%</div>


<!-- ===== formula bar icons ===== -->
<svg style="left:93px;top:180px" width="7" height="5"><path d="M0 0H7L3.5 4Z" fill="#605e5c"/></svg>
<div class="a" style="left:122px;top:178px;width:2px;height:2px;background:#c8c6c4"></div>
<div class="a" style="left:122px;top:184px;width:2px;height:2px;background:#c8c6c4"></div>
<div class="a" style="left:122px;top:190px;width:2px;height:2px;background:#c8c6c4"></div>
<svg style="left:151px;top:179px" width="12" height="12"><path d="M1 1L11 11M11 1L1 11" stroke="#c8c6c4" stroke-width="1.3"/></svg>
<svg style="left:187px;top:180px" width="14" height="12"><path d="M1 6L5 10.5L13 1.5" fill="none" stroke="#c8c6c4" stroke-width="2.2"/></svg>
<svg style="left:220px;top:176px" width="18" height="18" viewBox="220 176 18 18"><path d="M223.8 190.3C225 190.8 226 190 226.5 187.8L228 181C228.5 179.2 229.8 178.6 231.6 179.3M225.6 182.3H230" fill="none" stroke="#6e6c6a" stroke-width="1.3"/><path d="M228.2 185.3C229.3 184.9 230 185.4 230.5 186.5L231.4 188.3C231.9 189.2 232.9 189.4 234.2 188.7M234.2 185.2L228.3 189" fill="none" stroke="#6e6c6a" stroke-width="1.2"/></svg>

<!-- ===== scrollbars ===== -->
<!-- vertical -->
<div class="a" style="left:1116px;top:208px;width:20px;height:469px;background:#e6e6e6"></div>
<div class="a" style="left:1119px;top:260px;width:15px;height:403px;background:#d6d6d6"></div>
<div class="a" style="left:1119px;top:237px;width:15px;height:294px;background:#fff;border:1px solid #a6a6a6"></div>
<div class="a" style="left:1119px;top:663px;width:15px;height:14px;background:#fff;border:1px solid #c6c6c6"></div>
<svg style="left:1122px;top:668px" width="9" height="5"><path d="M0 0H9L4.5 4.5Z" fill="#605e5c"/></svg>
<!-- horizontal -->
<div class="a" style="left:682px;top:686px;width:2px;height:2px;background:#c8c6c4"></div>
<div class="a" style="left:682px;top:690px;width:2px;height:2px;background:#c8c6c4"></div>
<div class="a" style="left:682px;top:694px;width:2px;height:2px;background:#c8c6c4"></div>
<div class="a" style="left:699px;top:684px;width:417px;height:15px;background:#d6d6d6"></div>
<div class="a" style="left:714px;top:684px;width:338px;height:15px;background:#fff;border:1px solid #a6a6a6"></div>
<div class="a" style="left:699px;top:684px;width:15px;height:15px;background:#fff;border:1px solid #c6c6c6"></div>
<div class="a" style="left:1101px;top:684px;width:15px;height:15px;background:#fff;border:1px solid #c6c6c6"></div>
<svg style="left:704px;top:687px" width="5" height="9"><path d="M5 0V9L0.5 4.5Z" fill="#605e5c"/></svg>
<svg style="left:1106px;top:687px" width="5" height="9"><path d="M0 0V9L4.5 4.5Z" fill="#605e5c"/></svg>

<!-- ===== sheet tab extras ===== -->
<svg style="left:27px;top:686px" width="5" height="8"><path d="M5 0V8L0.5 4Z" fill="#c8c6c4"/></svg>
<svg style="left:56px;top:686px" width="5" height="8"><path d="M0 0V8L4.5 4Z" fill="#c8c6c4"/></svg>
<svg style="left:198px;top:682px" width="17" height="17" viewBox="0 0 17 17"><circle cx="8.5" cy="8.5" r="7.6" fill="none" stroke="#605e5c" stroke-width="1.1"/><path d="M8.5 4.5V12.5M4.5 8.5H12.5" stroke="#605e5c" stroke-width="1.3"/></svg>

<!-- ===== status bar icons ===== -->
<svg style="left:170px;top:704px" width="30" height="23" viewBox="170 704 30 23"><circle cx="183.9" cy="711.3" r="1.7" fill="none" stroke="#323130" stroke-width="1.1"/><path d="M181.6 715C180 714.5 178.5 714 178.5 712.5C178.5 711 180.5 710.8 182 712C183 713 185 713 186 712C187.5 710.8 189.5 711 189.5 712.5C189.5 714 188 714.5 186.5 715V717.5M181.6 715C181.8 717.5 181 720 180.4 721.5C180.2 722.5 181 723 182.2 722.6" fill="none" stroke="#323130" stroke-width="1.1"/><path d="M184.3 719L187.4 722.5L192.6 717" fill="none" stroke="#323130" stroke-width="1.1"/></svg>
<svg style="left:839px;top:709px" width="13" height="13" viewBox="0 0 13 13"><path d="M0.5 0.5H12.5V12.5H0.5ZM0.5 4.5H12.5M0.5 8.5H12.5M4.5 0.5V12.5M8.5 0.5V12.5" fill="none" stroke="#323130"/></svg>
<svg style="left:879px;top:709px" width="14" height="13" viewBox="0 0 14 13"><path d="M0.5 0.5H13.5V12.5H0.5ZM3.5 2.5H10.5V10.5H3.5ZM5 4.5H9M5 6.5H9M5 8.5H9" fill="none" stroke="#323130"/></svg>
<svg style="left:919px;top:709px" width="14" height="13" viewBox="0 0 14 13"><path d="M0.5 0.5H13.5V12.5H0.5ZM0.5 7.5H10.5V0.5M5.5 0.5V7.5M8 0.5V7.5" fill="none" stroke="#323130"/></svg>
<div class="a" style="left:952px;top:715px;width:8px;height:1px;background:#484644"></div>
<div class="a" style="left:965px;top:715px;width:99px;height:1px;background:#605e5c"></div>
<div class="a" style="left:1015px;top:712px;width:1px;height:7px;background:#605e5c"></div>
<div class="a" style="left:1021px;top:710px;width:5px;height:11px;background:#6e6c6a"></div>
<div class="a" style="left:1070px;top:715px;width:8px;height:1px;background:#484644"></div>
<div class="a" style="left:1073.5px;top:711.5px;width:1px;height:8px;background:#484644"></div>

<!-- ===== TEXT POPUP ===== -->
<div class="a" style="left:876px;top:160px;width:257px;height:95px;background:#fff;border:1px solid #c8c6c4;box-shadow:0 3px 6px rgba(0,0,0,0.18)"></div>
<svg style="left:889px;top:168px" width="32" height="26" viewBox="0 0 32 26">
<rect x="1.5" y="1.5" width="29" height="23" fill="#f9f9f9" stroke="#3b3a39" stroke-width="1"/>
<rect x="0" y="0" width="3" height="3" fill="#fff" stroke="#2b88d8" stroke-width="1"/>
<rect x="29" y="0" width="3" height="3" fill="#fff" stroke="#2b88d8" stroke-width="1"/>
<rect x="0" y="23" width="3" height="3" fill="#fff" stroke="#2b88d8" stroke-width="1"/>
<rect x="29" y="23" width="3" height="3" fill="#fff" stroke="#2b88d8" stroke-width="1"/>
<path d="M10.5 19.5L16 6L21.5 19.5M12.4 14.6H19.6" fill="none" stroke="#2b88d8" stroke-width="1.6"/>
</svg>
<div class="a" style="left:880px;top:163px;width:48px;height:78px;border:3px solid #000;border-radius:6px"></div>
<div class="t rl" style="left:884px;top:201.5px;width:40px;text-align:center">Text</div>
<div class="t rl" style="left:884px;top:217.5px;width:40px;text-align:center">Box</div>

<svg style="left:941px;top:167px" width="22" height="28" viewBox="0 0 22 28">
<path d="M0.5 0.5H12.5L20.5 8.5V27.5H0.5Z" fill="#f9f9f9" stroke="#323130"/>
<path d="M12.5 0.5V8.5H20.5" fill="#fff" stroke="#323130"/>
<rect x="4.5" y="4.5" width="8" height="4" fill="#fbe0a0" stroke="#d9730d"/>
<rect x="4.5" y="19.5" width="12" height="4" fill="#fbe0a0" stroke="#d9730d"/>
</svg>
<div class="t rl" style="left:927px;top:201.5px;width:50px;text-align:center">Header</div>
<div class="t rl" style="left:927px;top:217.5px;width:50px;text-align:center">&amp; Footer</div>

<svg style="left:990px;top:166px" width="26" height="30" viewBox="0 0 26 30">
<path d="M2.2 18.2L23.8 1.7L19 27.8M11 12.5L19.8 17.7" fill="none" stroke="#2b88d8" stroke-width="2.2" stroke-linecap="round"/>
</svg>
<div class="t rl" style="left:977px;top:201.5px;width:50px;text-align:center">WordArt</div>
<svg style="left:998px;top:221px" width="7" height="5"><path d="M1.2 1.2L3.5 3.5L5.8 1.2" fill="none" stroke="#323130" stroke-width="1.1"/></svg>

<svg style="left:1043px;top:166px" width="30" height="30" viewBox="0 0 30 30">
<path d="M20.5 10V28.5H1.5V1.5H13.5L18 6" fill="#f9f9f9" stroke="#323130"/>
<path d="M13.5 1.5V9.5H17" fill="none" stroke="#323130"/>
<path d="M8 23.5L10 18L23.5 5.5C24.5 4.6 26 4.6 26.8 5.5C27.6 6.4 27.5 7.8 26.6 8.6L13 21.2Z" fill="#fff" stroke="#2b88d8" stroke-width="1.1"/>
<path d="M10 18L13 21.2L8 23.5Z" fill="#9fc9f0" stroke="#2b88d8" stroke-width="1"/>
<path d="M22 7L25 10" stroke="#2b88d8" stroke-width="1"/>
<path d="M4 25.2H19" stroke="#2b88d8" stroke-width="1.1"/>
</svg>
<div class="t rl" style="left:1028px;top:201.5px;width:54px;text-align:center">Signature</div>
<div class="t rl" style="left:1038px;top:217.5px">Line</div>
<svg style="left:1063px;top:221px" width="7" height="5"><path d="M1.2 1.2L3.5 3.5L5.8 1.2" fill="none" stroke="#323130" stroke-width="1.1"/></svg>

<svg style="left:1087px;top:166px" width="30" height="30" viewBox="0 0 30 30">
<path d="M6.5 6V1.5H27.5V28.5H6.5V22" fill="#f9f9f9" stroke="#323130"/>
<rect x="1.5" y="7.5" width="14" height="14" fill="#f9f9f9" stroke="#0f6cbd" stroke-width="1.1"/>
<rect x="2" y="8" width="13" height="3" fill="#9fc9f0"/>
<path d="M1.5 10.5H15.5" stroke="#0f6cbd" stroke-width="1"/>
</svg>
<div class="t rl" style="left:1078px;top:201.5px;width:50px;text-align:center">Object</div>
<div class="t rl" style="left:978px;top:241px;width:50px;text-align:center">Text</div>

<!-- ===== ANNOTATIONS ===== -->
<div class="t" style="left:471px;top:268px;font-size:32px;font-weight:bold;color:#000">Text</div>
<div class="t" style="left:845px;top:466px;font-size:32px;font-weight:bold;color:#000">Text</div>
<div class="t" style="left:915px;top:466px;font-size:32px;font-weight:bold;color:#000;transform:scaleX(0.94);transform-origin:0 0">Box</div>
<svg style="left:0;top:0" width="1138" height="728">
<path d="M541.5 288.5L944 139" stroke="#000" stroke-width="3.2"/>
<path d="M956 133.6L938 134.5L942.4 145Z" fill="#000"/>
<path d="M904.5 465V258" stroke="#000" stroke-width="3.2"/>
<path d="M904.4 244L898.7 261.2L904.4 258.8L910.2 261.2Z" fill="#000"/>
</svg>

<!-- cursor -->
<svg style="left:1101px;top:604px" width="14" height="22" viewBox="0 0 14 22">
<path d="M0.5 0.5V16L4 12.8L6.6 18.8L9.6 17.8L7 12H11.5Z" fill="#fff" stroke="#111" stroke-width="1.1" stroke-linejoin="round"/>
</svg>

<!-- ===== window borders (on top) ===== -->
<div class="a" style="left:0;top:35px;width:1px;height:693px;background:#217346"></div>
<div class="a" style="left:1136px;top:35px;width:2px;height:693px;background:#217346"></div>
<div class="a" style="left:0;top:727px;width:1138px;height:1px;background:#217346"></div>

</body></html>
